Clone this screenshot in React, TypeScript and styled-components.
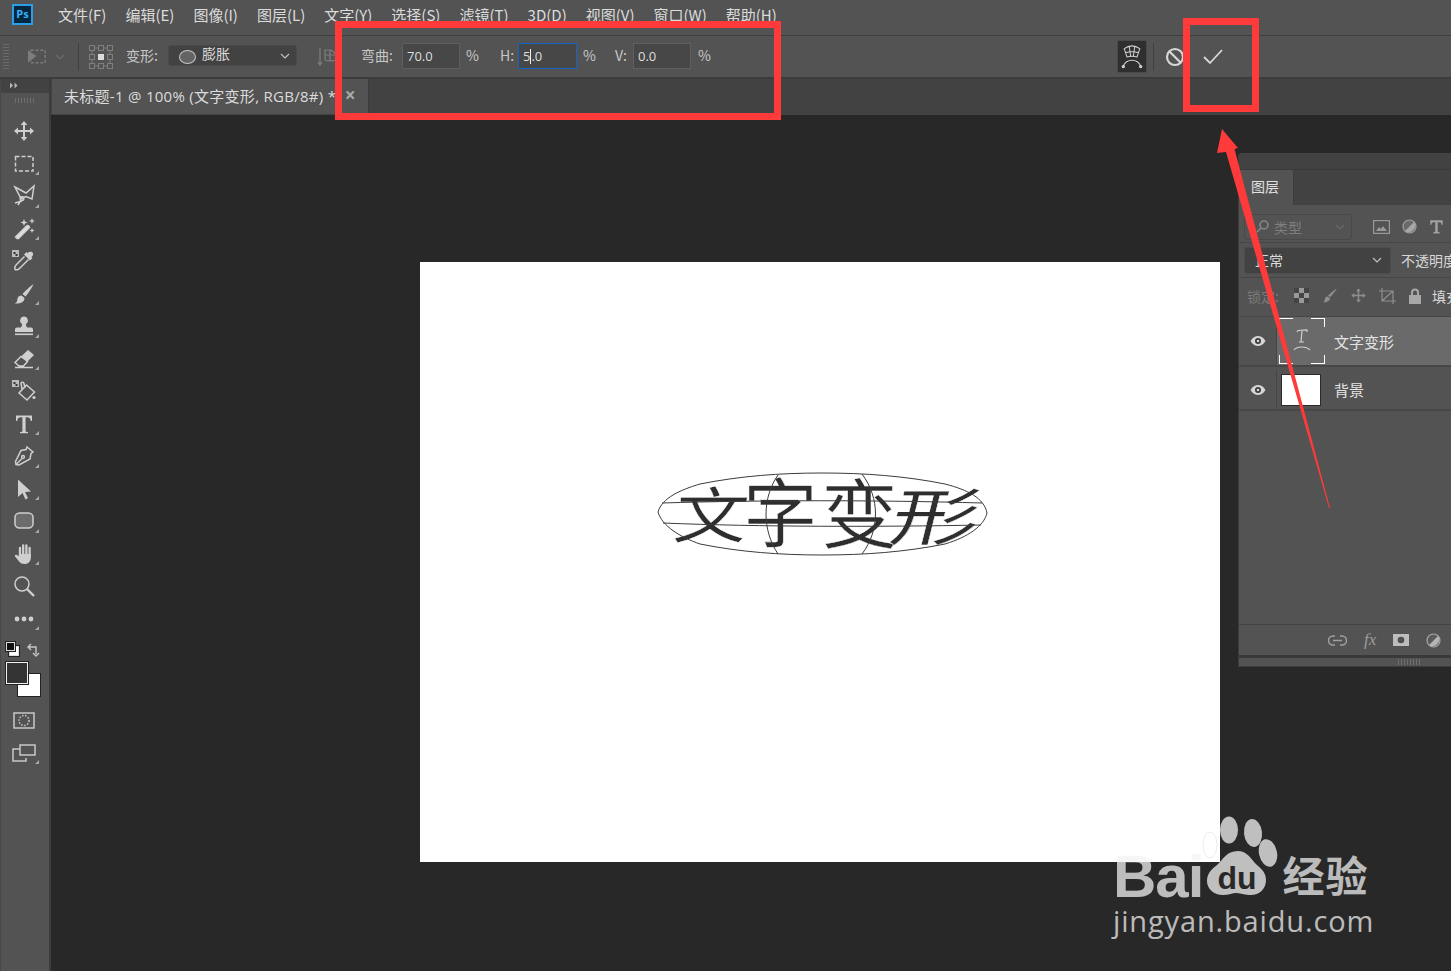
import React from 'react';
import styled, { createGlobalStyle } from 'styled-components';

const GlobalStyle = createGlobalStyle`
  html, body {
    margin: 0;
    padding: 0;
    background: #282828;
    overflow: hidden;
  }
  * { box-sizing: border-box; }
`;

const RED = '#fe3a3a';
const UI_FONT = '"Open Sans", "Noto Sans CJK SC", sans-serif';

const Page = styled.div`
  position: relative;
  width: 1451px;
  height: 971px;
  overflow: hidden;
  display: flex;
  flex-direction: column;
  background: #282828;
  color: #d6d6d6;
  font-family: ${UI_FONT};
  font-size: 14px;
`;

/* menu */
const MenuBar = styled.div`
  height: 36px;
  flex: none;
  display: flex;
  align-items: center;
  padding: 0 0 6px 12px;
  background: #535353;
  border-bottom: 1px solid #3f3f3f;
`;

const Logo = styled.div`
  width: 21px;
  height: 21px;
  margin-right: 25px;
  border: 2px solid #2b9fe6;
  background: #04263f;
  color: #38b0f5;
  font-size: 11px;
  font-weight: 700;
  line-height: 16px;
  text-align: center;
`;

const MenuItem = styled.span`
  margin-right: 19px;
  color: #dcdcdc;
  font-family: "Noto Sans CJK SC", sans-serif;
  font-size: 15px;
  white-space: nowrap;
`;

/* options bar */
const OptionsBar = styled.div`
  height: 43px;
  flex: none;
  display: flex;
  align-items: center;
  background: #535353;
  border-bottom: 2px solid #3c3c3c;
  font-size: 14px;
`;

const Slot = styled.div<{ $ml: number; $w: number }>`
  flex: none;
  display: flex;
  align-items: center;
  justify-content: center;
  margin-left: ${(p) => p.$ml}px;
  width: ${(p) => p.$w}px;
  white-space: nowrap;
  overflow: visible;
`;

const OptLabel = styled(Slot)`
  justify-content: flex-start;
  margin-top: -4px;
  color: #c8c8c8;
  font-family: "Noto Sans CJK SC", sans-serif;
`;

const Grip = styled.div`
  flex: none;
  margin-left: 3px;
  width: 6px;
  height: 26px;
  background: repeating-linear-gradient(180deg, #6b6b6b 0 1px, transparent 1px 3px);
`;

const VLine = styled.div<{ $ml: number }>`
  flex: none;
  margin-left: ${(p) => p.$ml}px;
  width: 1px;
  height: 28px;
  background: #3f3f3f;
`;

const WarpSelect = styled.div`
  flex: none;
  margin: -2px 0 0 7px;
  width: 129px;
  height: 21px;
  display: flex;
  align-items: center;
  gap: 6px;
  padding: 0 6px 0 10px;
  background: #424242;
  border: 1px solid #4a4a4a;
  border-radius: 3px;
  color: #dcdcdc;
  font-family: "Noto Sans CJK SC", sans-serif;
  font-size: 14px;
  line-height: 14px;
`;

const SelectText = styled.span`
  margin-top: -5px;
`;

const Oval = styled.span`
  width: 17px;
  height: 14px;
  margin-top: 2px;
  border: 1px solid #c4c4c4;
  border-radius: 50%;
  background: #646464;
`;

const Push = styled.span`
  margin-left: auto;
  display: flex;
`;

const NumInput = styled.div<{ $ml: number; $w: number; $focus?: boolean }>`
  flex: none;
  margin: -1px 0 0 ${(p) => p.$ml}px;
  width: ${(p) => p.$w}px;
  height: 26px;
  padding-left: 4px;
  line-height: 25px;
  font-size: 13px;
  color: #dedede;
  background: #474747;
  border: 1px solid ${(p) => (p.$focus ? '#1764c8' : '#5f5f5f')};
`;

const Caret = styled.span`
  display: inline-block;
  width: 1px;
  height: 15px;
  vertical-align: -3px;
  background: #f0f0f0;
`;

const WarpButton = styled.div`
  flex: none;
  margin-left: auto;
  width: 30px;
  height: 33px;
  display: flex;
  align-items: center;
  justify-content: center;
  background: #2f2f2f;
  border: 1px solid #4a4a4a;
  border-radius: 2px;
`;

const EndGap = styled.div`
  flex: none;
  width: 227px;
`;

/* body */
const Body = styled.div`
  flex: 1;
  min-height: 0;
  display: flex;
`;

const ToolColumn = styled.aside`
  flex: none;
  width: 51px;
  display: flex;
  flex-direction: column;
  background: #535353;
  border-left: 1px solid #484848;
  border-right: 2px solid #3c3c3c;
`;

const CollapseStrip = styled.div`
  height: 14px;
  flex: none;
  padding: 3px 0 0 9px;
  display: flex;
  background: #424242;
`;

const ToolGrip = styled.div`
  flex: none;
  height: 22px;
  margin: 0 14px;
  padding-top: 5px;
  &::before {
    content: '';
    display: block;
    height: 5px;
    background: repeating-linear-gradient(90deg, #6e6e6e 0 1px, transparent 1px 3px);
  }
`;

const Tool = styled.div<{ $corner?: boolean }>`
  position: relative;
  flex: none;
  height: 32.5px;
  margin-right: 2px;
  display: flex;
  align-items: center;
  justify-content: center;
  &::after {
    content: '';
    display: ${(p) => (p.$corner ? 'block' : 'none')};
    position: absolute;
    right: 8px;
    bottom: 5px;
    border-style: solid;
    border-width: 0 0 4px 4px;
    border-color: transparent transparent #a8a8a8 transparent;
  }
`;

const SwatchArea = styled.div`
  position: relative;
  flex: none;
  height: 69px;
`;

const Swatch = styled.div<{ $x: number; $y: number; $s: number; $bg: string; $line?: string }>`
  position: absolute;
  left: ${(p) => p.$x}px;
  top: ${(p) => p.$y}px;
  width: ${(p) => p.$s}px;
  height: ${(p) => p.$s}px;
  background: ${(p) => p.$bg};
  border: 1px solid ${(p) => p.$line || '#fff'};
  box-shadow: 0 0 0 1px #222;
`;

const SwapIcon = styled.div`
  position: absolute;
  left: 26px;
  top: 7px;
`;

const Main = styled.main`
  flex: 1;
  min-width: 0;
  display: flex;
  flex-direction: column;
`;

const TabBar = styled.div`
  height: 36px;
  flex: none;
  display: flex;
  padding-left: 1px;
  background: #424242;
`;

const DocTab = styled.div`
  width: 317px;
  height: 35px;
  display: flex;
  align-items: center;
  justify-content: space-between;
  padding: 0 12px 3px 12px;
  background: #535353;
  border-right: 1px solid #3c3c3c;
  color: #dcdcdc;
  font-size: 15px;
  white-space: nowrap;
  letter-spacing: 0.28px;
`;

const TabClose = styled.span`
  margin: 0 0 0 auto;
  color: #a8a8a8;
  font-size: 19px;
  font-weight: 700;
  line-height: 20px;
`;

const Workspace = styled.div`
  flex: 1;
  background: #282828;
  padding: 147px 0 0 369px;
`;

const Canvas = styled.div`
  position: relative;
  width: 800px;
  height: 600px;
  background: #fff;
`;

const WarpDrawing = styled.svg`
  position: absolute;
  left: 220px;
  top: 200px;
`;

/* layers panel */
const LayersPanel = styled.section`
  position: absolute;
  left: 1238px;
  top: 153px;
  width: 240px;
  height: 514px;
  display: flex;
  flex-direction: column;
  background: #535353;
  border-left: 1px solid #3c3c3c;
  border-bottom: 1px solid #3c3c3c;
  border-top-left-radius: 4px;
  overflow: hidden;
`;

const PanelTop = styled.div`
  flex: none;
  height: 17px;
  background: #424242;
  border-bottom: 1px solid #3a3a3a;
`;

const PanelTabs = styled.div`
  flex: none;
  height: 35px;
  display: flex;
  background: #424242;
`;

const PanelTab = styled.div`
  width: 55px;
  padding-left: 12px;
  line-height: 33px;
  background: #535353;
  border-right: 1px solid #3c3c3c;
  color: #e2e2e2;
  font-family: "Noto Sans CJK SC", sans-serif;
  font-size: 14px;
`;

const PanelRow = styled.div<{ $h: number; $pt?: number; $pb?: number }>`
  flex: none;
  height: ${(p) => p.$h}px;
  display: flex;
  align-items: center;
  padding: ${(p) => p.$pt || 0}px 0 ${(p) => p.$pb || 0}px 5px;
  border-bottom: 1px solid #464646;
  white-space: nowrap;
  font-family: "Noto Sans CJK SC", sans-serif;
`;

const SearchBox = styled.div`
  width: 108px;
  height: 26px;
  display: flex;
  align-items: center;
  gap: 4px;
  padding: 0 6px 0 10px;
  border: 1px solid #494949;
  border-radius: 3px;
  color: #7e7e7e;
  font-size: 14px;
`;

const IconRow = styled.div<{ $gap: number; $ml: number }>`
  display: flex;
  align-items: center;
  gap: ${(p) => p.$gap}px;
  margin-left: ${(p) => p.$ml}px;
`;

const BlendSelect = styled.div`
  width: 147px;
  height: 27px;
  display: flex;
  align-items: center;
  padding: 0 8px 0 10px;
  background: #424242;
  border: 1px solid #4c4c4c;
  border-radius: 3px;
  color: #dcdcdc;
`;

const PanelText = styled.span<{ $ml: number; $dim?: boolean }>`
  margin-left: ${(p) => p.$ml}px;
  color: ${(p) => (p.$dim ? '#7a7a7a' : '#d8d8d8')};
`;

const LayerRow = styled.div<{ $h: number; $pt?: number }>`
  flex: none;
  height: ${(p) => p.$h}px;
  display: flex;
  padding-top: ${(p) => p.$pt || 0}px;
  border-bottom: 2px solid #474747;
`;

const EyeCell = styled.div`
  flex: none;
  width: 38px;
  display: flex;
  align-items: center;
  justify-content: center;
  border-right: 1px solid #464646;
`;

const LayerBody = styled.div<{ $on?: boolean }>`
  flex: 1;
  display: flex;
  align-items: center;
  background: ${(p) => (p.$on ? '#6a6a6a' : 'transparent')};
  color: #e4e4e4;
  font-family: "Noto Sans CJK SC", sans-serif;
  font-size: 15px;
`;

const TextThumb = styled.div`
  flex: none;
  width: 46px;
  height: 46px;
  margin: 0 9px 0 2px;
  display: flex;
  align-items: center;
  justify-content: center;
  background:
    linear-gradient(#fff, #fff) 0 0 / 14px 1px no-repeat,
    linear-gradient(#fff, #fff) 0 0 / 1px 9px no-repeat,
    linear-gradient(#fff, #fff) 100% 0 / 14px 1px no-repeat,
    linear-gradient(#fff, #fff) 100% 0 / 1px 9px no-repeat,
    linear-gradient(#fff, #fff) 0 100% / 14px 1px no-repeat,
    linear-gradient(#fff, #fff) 0 100% / 1px 9px no-repeat,
    linear-gradient(#fff, #fff) 100% 100% / 14px 1px no-repeat,
    linear-gradient(#fff, #fff) 100% 100% / 1px 9px no-repeat;
`;

const WhiteThumb = styled.div`
  flex: none;
  width: 40px;
  height: 32px;
  margin: 0 13px 0 4px;
  background: #fff;
  border: 1px solid #2a2a2a;
`;

const LayersFill = styled.div`
  flex: 1;
  border-bottom: 1px solid #434343;
`;

const PanelFooter = styled.div`
  flex: none;
  height: 33px;
  display: flex;
  align-items: center;
  gap: 17px;
  padding-left: 89px;
  border-bottom: 3px solid #3a3a3a;
  color: #a8a8a8;
`;

const FxMark = styled.span`
  font-family: "Liberation Serif", serif;
  font-style: italic;
  font-size: 17px;
  color: #9c9c9c;
`;

const PanelGrip = styled.div`
  flex: none;
  height: 8px;
  &::before {
    content: '';
    display: block;
    width: 24px;
    height: 6px;
    margin: 1px 0 0 159px;
    background: repeating-linear-gradient(90deg, #6e6e6e 0 1px, transparent 1px 3px);
  }
`;

/* annotations */
const RedBox = styled.div<{ $x: number; $y: number; $w: number; $h: number }>`
  position: absolute;
  left: ${(p) => p.$x}px;
  top: ${(p) => p.$y}px;
  width: ${(p) => p.$w}px;
  height: ${(p) => p.$h}px;
  border: 7px solid ${RED};
`;

const ArrowLayer = styled.svg`
  position: absolute;
  left: 0;
  top: 0;
  pointer-events: none;
`;

/* watermark */
const Watermark = styled.div`
  position: absolute;
  left: 1113px;
  top: 816px;
  width: 270px;
  color: rgba(255, 255, 255, 0.7);
`;

const BrandRow = styled.div`
  display: flex;
  align-items: flex-end;
  height: 84px;
`;

const BrandBai = styled.span`
  margin-bottom: -3px;
  font-family: "Liberation Sans", sans-serif;
  font-weight: 700;
  font-size: 60px;
  line-height: 52px;
  height: 52px;
  letter-spacing: -1px;
  text-shadow: 0 0 1px rgba(0, 0, 0, 0.12);
`;

const PawMark = styled.svg`
  flex: none;
  margin-left: -3px;
`;

const BrandCn = styled.span`
  margin: 0 0 1px 4px;
  font-family: "Noto Sans CJK SC", sans-serif;
  font-weight: 700;
  font-size: 42px;
  line-height: 50px;
  letter-spacing: 1px;
`;

const BrandDomain = styled.div`
  margin-top: 4px;
  font-family: "Open Sans", sans-serif;
  font-size: 29px;
  line-height: 34px;
  letter-spacing: 0.85px;
  white-space: nowrap;
`;

/* icons */
const S = '#cfcfcf';

const Svg: React.FC<{ s?: number; v?: string; children: React.ReactNode }> = ({ s = 24, v, children }) => (
  <svg width={s} height={s} viewBox={v || '0 0 24 24'} fill="none" stroke={S} strokeWidth={1.5}>
    {children}
  </svg>
);

const Checker = () => (
  <g stroke="none">
    <rect x="0" y="1" width="7" height="7" fill="#bbb" />
    <rect x="1.5" y="3" width="2" height="2" fill="#333" />
    <rect x="3.5" y="5" width="2" height="2" fill="#333" />
  </g>
);

const toolIcons: { icon: React.ReactNode; corner?: boolean }[] = [
  {
    icon: (
      <Svg>
        <path fill={S} stroke="none" d="M12 2l3.4 4h-2.4v5h5V8.6l4 3.4-4 3.4V13h-5v5h2.4L12 22l-3.4-4H11v-5H6v2.4L2 12l4-3.4V11h5V6H8.600z" />
      </Svg>
    ),
  },
  {
    corner: true,
    icon: (
      <Svg>
        <rect x="3.500" y="4.500" width="17.500" height="14.500" strokeDasharray="4 2" />
      </Svg>
    ),
  },
  {
    corner: true,
    icon: (
      <Svg>
        <path d="M3 3l11 6 8-7-2 13-6-2.500-5 2z" />
        <circle cx="10" cy="14.500" r="1.800" />
        <path d="M9 16l-3 5M3 19l7-2" />
      </Svg>
    ),
  },
  {
    corner: true,
    icon: (
      <Svg>
        <path d="M5 21.500l-1.500-1.500L14.500 9c1-1 3-.5 3 1.500L6.500 21.500z" fill="#e0e0e0" />
        <path fill={S} stroke="none" d="M12 2l1 2.500 2.500 1-2.500 1-1 2.500-1-2.500-2.500-1 2.500-1zM20 1l.8 2.200 2.200.8-2.200.8-.8 2.200-.8-2.200-2.200-.8 2.200-.8zM20 11l.7 1.800 1.800.7-1.800.7-.7 1.800-.7-1.800-1.800-.7 1.800-.7z" />
      </Svg>
    ),
  },
  {
    icon: (
      <Svg>
        <Checker />
        <path fill={S} stroke="none" d="M16 3.500c1.500-1.500 5-1 5 1 .5 1.500-.5 2.500-1.500 3.500l1 1-2.500 2.500-6-6L14.500 3l1.500 1.500z" />
        <path d="M12.500 7.500L4 16c-1 1-1.500 3-1 4.500 1.500.5 3.500 0 4.500-1l9-9" />
      </Svg>
    ),
  },
  {
    corner: true,
    icon: (
      <Svg>
        <path fill={S} stroke="none" d="M21.500 2c-1 3-5 9-8 12.500l-3-2.500C13 9 18.500 4 21.500 2z" />
        <path fill={S} stroke="none" d="M9.500 13.500l3 2.500c0 4-4 6-10 5.500 3-1 2.500-3 3-5 .5-2 2-3 4-3z" />
      </Svg>
    ),
  },
  {
    corner: true,
    icon: (
      <Svg>
        <path fill={S} stroke="none" d="M12 2.500a4 4 0 0 1 2 7.400c0 1.600.5 3.100 1.500 3.600H19a2 2 0 0 1 2 2V18H3v-2.500a2 2 0 0 1 2-2h3.500c1-.5 1.500-2 1.500-3.600a4 4 0 0 1 2-7.400z" />
        <rect x="3" y="19.500" width="18" height="1.600" fill={S} stroke="none" />
      </Svg>
    ),
  },
  {
    corner: true,
    icon: (
      <Svg>
        <path fill={S} stroke="none" d="M9 9.500L16 3l6 5-6.500 6.500z" />
        <path d="M9 9.500l6.500 5-4 4.500H7l-4-3.500zM3 20.500h18" />
      </Svg>
    ),
  },
  {
    icon: (
      <Svg>
        <Checker />
        <path d="M14.500 6l8 7-7.500 8-8-7zM10 10L9 4.500c0-1.500 2.500-2 3 0l1 4.500" />
        <circle cx="22" cy="18.500" r="1.600" fill={S} stroke="none" />
      </Svg>
    ),
  },
  {
    corner: true,
    icon: (
      <Svg>
        <path fill={S} stroke="none" d="M4 3.500h16V9h-1.200c-.3-2.500-1-3.800-3.800-3.800h-1.400V19c0 .8.800 1 2.400 1v1.200H8V20c1.600 0 2.400-.2 2.400-1V5.200H9c-2.800 0-3.500 1.300-3.800 3.800H4z" />
      </Svg>
    ),
  },
  {
    corner: true,
    icon: (
      <Svg>
        <path d="M15 3l6 5-2 1.500-1 5.500-11 6-3-.5-.5-3L9 6.500l5-1z" />
        <path d="M4 20.500l6-6" />
        <circle cx="11" cy="13" r="1.400" />
      </Svg>
    ),
  },
  {
    corner: true,
    icon: (
      <Svg>
        <path fill={S} stroke="none" d="M6 2.500l13 12-6 .5 3 6-2.500 1.500-3-6.500L6 20z" />
      </Svg>
    ),
  },
  {
    corner: true,
    icon: (
      <Svg>
        <rect x="3" y="4" width="18" height="15" rx="4.500" fill="#6c6c6c" />
      </Svg>
    ),
  },
  {
    corner: true,
    icon: (
      <Svg>
        <path d="M8 6v8M11.200 3.500v9M14.400 3.500v9M17.600 6v9" strokeWidth={2.300} strokeLinecap="round" />
        <path fill={S} stroke="none" d="M6.800 12h12v3.500c0 4-2.500 6.500-6 6.500-3 0-5-1-6.500-3.500L3 14.500c-.7-1.300.8-2.500 2-1.500l1.800 1.500z" />
      </Svg>
    ),
  },
  {
    icon: (
      <Svg>
        <circle cx="10" cy="10" r="7" />
        <path d="M15 15l7 7" strokeWidth={2.400} />
      </Svg>
    ),
  },
  {
    corner: true,
    icon: (
      <Svg>
        <g fill={S} stroke="none">
          <circle cx="5" cy="12" r="2.400" />
          <circle cx="12" cy="12" r="2.400" />
          <circle cx="19" cy="12" r="2.400" />
        </g>
      </Svg>
    ),
  },
];

const menuItems = ['文件(F)', '编辑(E)', '图像(I)', '图层(L)', '文字(Y)', '选择(S)', '滤镜(T)', '3D(D)', '视图(V)', '窗口(W)', '帮助(H)'];

const Chevron = ({ c = '#c0c0c0' }: { c?: string }) => (
  <svg width="10" height="6" viewBox="0 0 10 6" fill="none" stroke={c} strokeWidth="1.200">
    <path d="M1 1l4 4 4-4" />
  </svg>
);

const Eye = () => (
  <svg width="16" height="12" viewBox="0 0 16 12">
    <path d="M0.500 6C3 2 5.500 1 8 1s5 1 7.500 5C13 10 10.500 11 8 11S3 10 .5 6z" fill="#d6d6d6" />
    <circle cx="8" cy="6" r="3" fill="#3a3a3a" />
    <circle cx="8" cy="6" r="1.300" fill="#d6d6d6" />
  </svg>
);

const WarpMesh = () => (
  <svg width="22" height="25" viewBox="0 0 24 27" fill="none" stroke="#d2d2d2" strokeWidth="1.100">
    <path d="M3.500 5C9 1 15 1 20.500 5l-3 9c-3.500-1-7.500-1-11 0zM4.500 9.500c5-1.500 10-1.500 15 0M9 2.500l1.500 10.500M15 2.500L13.500 13" />
    <path d="M2.500 24c2-5 5-6.500 9.500-6.500s7.500 1.500 9.500 6.500" />
    <circle cx="2.500" cy="24.500" r="1.300" fill="#d2d2d2" />
    <circle cx="21.500" cy="24.500" r="1.300" fill="#d2d2d2" />
  </svg>
);

const App = () => {
  return (
    <Page>
      <GlobalStyle />

      <MenuBar>
        <Logo>Ps</Logo>
        {menuItems.map((m) => (
          <MenuItem key={m}>{m}</MenuItem>
        ))}
      </MenuBar>

      <OptionsBar>
        <Grip />
        <Slot $ml={18} $w={20}>
          <svg width="21" height="17" viewBox="0 0 21 17" fill="none" stroke="#7c7c7c" strokeWidth="1.500">
            <rect x="4" y="2" width="15" height="13" strokeDasharray="3 2" />
            <path d="M1 2l9 6-9 7z" fill="#7c7c7c" stroke="none" />
          </svg>
        </Slot>
        <Slot $ml={8} $w={10}>
          <Chevron c="#6c6c6c" />
        </Slot>
        <VLine $ml={13} />
        <Slot $ml={10} $w={24}>
          <svg width="24" height="24" viewBox="0 0 24 24" fill="none" stroke="#7f7f7f">
            {[0, 9, 18].map((y) =>
              [0, 9, 18].map((x) => <rect key={`${x}-${y}`} x={x + 0.5} y={y + 0.5} width="5" height="5" />)
            )}
            <path d="M6 3h3M15 3h3M6 21h3M15 21h3M3 6v3M3 15v3M21 6v3M21 15v3" />
            <rect x="9" y="9" width="6" height="6" fill="#dcdcdc" stroke="none" />
          </svg>
        </Slot>
        <OptLabel $ml={13} $w={35}>变形:</OptLabel>
        <WarpSelect>
          <Oval />
          <SelectText>膨胀</SelectText>
          <Push>
            <Chevron />
          </Push>
        </WarpSelect>
        <Slot $ml={20} $w={20}>
          <svg width="20" height="20" viewBox="0 0 20 20" fill="none" stroke="#7f7f7f" strokeWidth="1.200">
            <path d="M3 1v17M1 15l2 3 2-3M8 3h6l5 4v6c-3 1-8 1-11 0zM8 8h11M13 3v11" />
          </svg>
        </Slot>
        <OptLabel $ml={24} $w={35}>弯曲:</OptLabel>
        <NumInput $ml={6} $w={58}>70.0</NumInput>
        <OptLabel $ml={6} $w={14}>%</OptLabel>
        <OptLabel $ml={20} $w={14}>H:</OptLabel>
        <NumInput $ml={4} $w={59} $focus>
          5<Caret />.0
        </NumInput>
        <OptLabel $ml={6} $w={12}>%</OptLabel>
        <OptLabel $ml={20} $w={13}>V:</OptLabel>
        <NumInput $ml={5} $w={58}>0.0</NumInput>
        <OptLabel $ml={7} $w={14}>%</OptLabel>
        <WarpButton>
          <WarpMesh />
        </WarpButton>
        <VLine $ml={6} />
        <Slot $ml={11} $w={20}>
          <svg width="20" height="20" viewBox="0 0 20 20" fill="none" stroke="#d8d8d8" strokeWidth="2.200">
            <circle cx="10" cy="10" r="8" />
            <path d="M4.500 4.500l11 11" />
          </svg>
        </Slot>
        <Slot $ml={17} $w={22}>
          <svg width="22" height="18" viewBox="0 0 22 18" fill="none" stroke="#d8d8d8" strokeWidth="1.800">
            <path d="M2 9l6 6L20 2" />
          </svg>
        </Slot>
        <EndGap />
      </OptionsBar>

      <Body>
        <ToolColumn>
          <CollapseStrip>
            <svg width="8" height="7" viewBox="0 0 8 7" fill="#b8b8b8">
              <path d="M0 .5l3 3-3 3zM4.500 .5l3 3-3 3z" />
            </svg>
          </CollapseStrip>
          <ToolGrip />
          {toolIcons.map((t, i) => (
            <Tool key={i} $corner={t.corner}>
              {t.icon}
            </Tool>
          ))}
          <SwatchArea>
            <Swatch $x={8} $y={11} $s={10} $bg="#fff" $line="#ddd" />
            <Swatch $x={5} $y={7} $s={9} $bg="#111" $line="#ddd" />
            <SwapIcon>
              <svg width="14" height="14" viewBox="0 0 14 14" fill="none" stroke="#c8c8c8" strokeWidth="1.400">
                <path d="M1 4h8v7M4 1L1 4l3 3M6 10l3 3 3-3" />
              </svg>
            </SwapIcon>
            <Swatch $x={17} $y={39} $s={22} $bg="#fff" $line="#fff" />
            <Swatch $x={5} $y={27} $s={22} $bg="#333" $line="#f0f0f0" />
          </SwatchArea>
          <Tool>
            <svg width="22" height="17" viewBox="0 0 22 17" fill="none" stroke="#c8c8c8" strokeWidth="1.500">
              <rect x="1" y="1" width="20" height="15" />
              <circle cx="11" cy="8.500" r="5" strokeDasharray="1.500 1.500" />
            </svg>
          </Tool>
          <Tool $corner>
            <svg width="24" height="18" viewBox="0 0 24 18" fill="none" stroke="#c8c8c8" strokeWidth="1.500">
              <path d="M14 14v3H1V5h7" />
              <rect x="8" y="1" width="15" height="10" />
            </svg>
          </Tool>
        </ToolColumn>

        <Main>
          <TabBar>
            <DocTab>
              未标题-1 @ 100% (文字变形, RGB/8#) *
              <TabClose>×</TabClose>
            </DocTab>
          </TabBar>
          <Workspace>
            <Canvas>
              <WarpDrawing width="360" height="110" viewBox="640 462 360 110">
                <g fontFamily='"Noto Sans CJK SC", sans-serif' fill="#2e2e2e" stroke="#fff" strokeWidth=".4">
                  <text transform="translate(672 538) scale(1.080 .900) skewX(-6)" fontSize="68">文</text>
                  <text transform="translate(743 541) scale(1.100 1.100)" fontSize="68">字</text>
                  <text transform="translate(821 542) scale(1.130 1.100)" fontSize="68">变</text>
                  <text transform="translate(887 540) scale(1.290 .920) skewX(-10)" fontSize="68">形</text>
                </g>
                <g fill="none" stroke="#3c3c3c" strokeWidth="1">
                  <path d="M658 512C662 498 680 490 700 484C740 476 780 473 822 473C865 473 905 476 945 484C968 490 984 498 987 513C984 526 968 537 945 544C905 552 865 555 822 555C780 555 740 552 700 544C680 537 662 526 658 512Z" />
                  <path d="M662 503C760 500 880 500 982 503" />
                  <path d="M663 523C760 527 880 527 981 525" />
                  <path d="M778 475C762 498 762 530 778 554" />
                  <path d="M862 474C880 498 880 530 862 554" />
                </g>
              </WarpDrawing>
            </Canvas>
          </Workspace>
        </Main>
      </Body>

      <LayersPanel>
        <PanelTop />
        <PanelTabs>
          <PanelTab>图层</PanelTab>
        </PanelTabs>
        <PanelRow $h={38} $pt={6}>
          <SearchBox>
            <svg width="15" height="15" viewBox="0 0 15 15" fill="none" stroke="#8a8a8a" strokeWidth="1.500">
              <circle cx="9" cy="6" r="4" />
              <path d="M6 9l-4 4" />
            </svg>
            类型
            <Push>
              <Chevron c="#6a6a6a" />
            </Push>
          </SearchBox>
          <IconRow $gap={12} $ml={21}>
            <svg width="17" height="14" viewBox="0 0 17 14" fill="none" stroke="#999" strokeWidth="1.200">
              <rect x=".6" y=".6" width="15.800" height="12.800" />
              <path d="M3 11l3-4 2 2 2-3 4 5z" fill="#999" stroke="none" />
            </svg>
            <svg width="15" height="15" viewBox="0 0 15 15">
              <circle cx="7.500" cy="7.500" r="6.500" fill="#6a6a6a" stroke="#a0a0a0" strokeWidth="1.200" />
              <path d="M12 3a6.500 6.500 0 0 1-9 9z" fill="#a8a8a8" />
            </svg>
            <svg width="15" height="15" viewBox="0 0 24 24">
              <path fill="#a0a0a0" d="M2 2h20v7h-2c-.3-3-1-4-4-4h-2v15c0 .8 1 1 3 1v2H7v-2c2 0 3-.2 3-1V5H8C5 5 4.300 6 4 9H2z" />
            </svg>
          </IconRow>
        </PanelRow>
        <PanelRow $h={35}>
          <BlendSelect>
            正常
            <Push>
              <Chevron />
            </Push>
          </BlendSelect>
          <PanelText $ml={10}>不透明度:</PanelText>
        </PanelRow>
        <PanelRow $h={39} $pb={3}>
          <PanelText $ml={3} $dim>锁定:</PanelText>
          <IconRow $gap={12} $ml={15}>
            <svg width="15" height="15" viewBox="0 0 15 15">
              <rect width="15" height="15" fill="#999" />
              <path d="M0 0h5v5H0zM10 0h5v5h-5zM5 5h5v5H5zM0 10h5v5H0zM10 10h5v5h-5z" fill="#444" />
            </svg>
            <svg width="17" height="17" viewBox="0 0 24 24">
              <path fill="#8f8f8f" d="M22 2c-1 3-6 9-9 12.500l-3-2.500C13 9 19 4 22 2zM9.500 13.500l3 2.500c0 4-4 6-10 5.500 3-1 2.500-3 3-5 .5-2 2-3 4-3z" />
            </svg>
            <svg width="17" height="17" viewBox="0 0 24 24">
              <path fill="#8f8f8f" d="M12 2l3.400 4h-2.400v5h5V8.600l4 3.400-4 3.400V13h-5v5h2.400L12 22l-3.400-4H11v-5H6v2.400L2 12l4-3.400V11h5V6H8.600z" />
            </svg>
            <svg width="17" height="17" viewBox="0 0 17 17" fill="none" stroke="#8f8f8f" strokeWidth="1.200">
              <path d="M3 4h11v10H3zM0 4h3M14 14h3M3 1v3M14 14v3M3 14l11-10" />
            </svg>
            <svg width="14" height="16" viewBox="0 0 14 16">
              <path fill="#a8a8a8" d="M3 7V4.500a4 4 0 0 1 8 0V7h2v9H1V7zm2 0h4V4.500a2 2 0 0 0-4 0z" />
            </svg>
          </IconRow>
          <PanelText $ml={10}>填充:</PanelText>
        </PanelRow>
        <LayerRow $h={50}>
          <EyeCell>
            <Eye />
          </EyeCell>
          <LayerBody $on>
            <TextThumb>
              <svg width="20" height="24" viewBox="0 0 20 24" fill="none" stroke="#d0d0d0" strokeWidth="1.200">
                <path d="M5 3l1-1.500L15 1v2M10 2L9 13M7 13h5M2 21c3-4 12-4 16 0" />
              </svg>
            </TextThumb>
            文字变形
          </LayerBody>
        </LayerRow>
        <LayerRow $h={44} $pt={3}>
          <EyeCell>
            <Eye />
          </EyeCell>
          <LayerBody>
            <WhiteThumb />
            背景
          </LayerBody>
        </LayerRow>
        <LayersFill />
        <PanelFooter>
          <svg width="19" height="11" viewBox="0 0 19 11" fill="none" stroke="#a0a0a0" strokeWidth="1.500">
            <path d="M7 1H5a4.200 4.200 0 0 0 0 9h2M12 1h2a4.200 4.200 0 0 1 0 9h-2M5 5.500h9" />
          </svg>
          <FxMark>fx</FxMark>
          <svg width="16" height="12" viewBox="0 0 16 12">
            <rect width="16" height="12" fill="#bdbdbd" />
            <circle cx="8" cy="6" r="3.300" fill="#4f4f4f" />
          </svg>
          <svg width="15" height="15" viewBox="0 0 15 15">
            <circle cx="7.500" cy="7.500" r="6.500" fill="#5a5a5a" stroke="#a8a8a8" strokeWidth="1.200" />
            <path d="M12 3a6.500 6.500 0 0 1-9 9z" fill="#b5b5b5" />
          </svg>
        </PanelFooter>
        <PanelGrip />
      </LayersPanel>

      <Watermark>
        <BrandRow>
          <BrandBai>Bai</BrandBai>
          <PawMark width="78" height="84" viewBox="0 0 78 84" fill="rgba(255,255,255,.7)">
            <ellipse cx="10" cy="29" rx="7" ry="13" fill="none" stroke="rgba(0,0,0,.08)" />
            <ellipse cx="29" cy="14" rx="9" ry="13.500" />
            <ellipse cx="53" cy="17" rx="9" ry="14" transform="rotate(-6 53 17)" />
            <ellipse cx="68" cy="37" rx="9" ry="14" transform="rotate(-12 68 37)" />
            <path d="M38 35c8 0 12 6 16 11 4 5 12 8 12 18 0 10-8 16-17 15-6-.5-10-2-13-2s-7 2-13 2C14 79 7 73 7 65c0-8 5-12 10-16 6-5 9-14 21-14z" />
            <text x="37" y="73" textAnchor="middle" fontFamily='"Liberation Sans", sans-serif' fontWeight="700" fontSize="32" fill="#282828">du</text>
          </PawMark>
          <BrandCn>经验</BrandCn>
        </BrandRow>
        <BrandDomain>jingyan.baidu.com</BrandDomain>
      </Watermark>

      <RedBox $x={335} $y={21} $w={446} $h={99} />
      <RedBox $x={1183} $y={18} $w={76} $h={94} />
      <ArrowLayer width="1451" height="971" viewBox="0 0 1451 971">
        <polygon fill={RED} points="1222,129 1238,148 1234.500,149 1330,508 1329,508 1226,152 1217,153" />
      </ArrowLayer>
    </Page>
  );
};

export default App;
